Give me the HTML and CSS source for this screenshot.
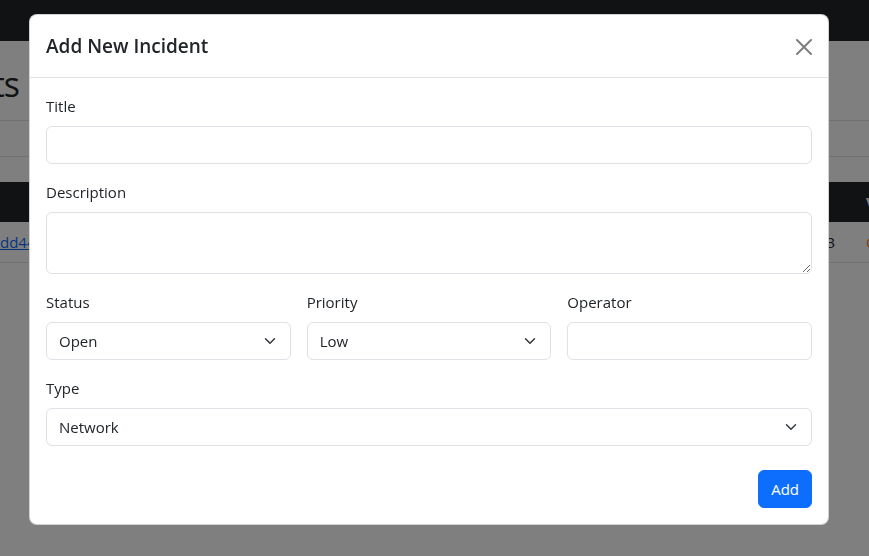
FILE: index.html
```html
<!DOCTYPE html>
<html lang="en">
<head>
<meta charset="utf-8">
<title>Incidents</title>
<link rel="stylesheet" href="styles.css">
</head>
<body>
  <nav class="navbar"></nav>
  <main class="page">
    <div class="page-head"><h1 class="page-title">Incidents</h1></div>
    <div class="toolbar"></div>
    <table class="grid">
      <colgroup>
        <col class="c-id"><col class="c-title"><col class="c-type"><col class="c-num"><col class="c-vendor">
      </colgroup>
      <thead>
        <tr><th></th><th>Title</th><th>Type</th><th>Priority</th><th class="vendor">Vendor</th></tr>
      </thead>
      <tbody>
        <tr><td><a href="#" class="id-link">dd4421a7</a></td><td>Router outage</td><td>Network</td><td class="num">3</td><td class="vendor status-open">Open</td></tr>
      </tbody>
    </table>
  </main>

  <div class="backdrop"></div>

  <div class="modal" role="dialog" aria-modal="true">
    <div class="modal-dialog">
      <div class="modal-content">
        <div class="modal-header">
          <h5 class="modal-title">Add New Incident</h5>
          <button type="button" class="btn-close" aria-label="Close">
            <svg viewBox="0 0 16 16" width="16" height="16" aria-hidden="true"><path d="M.293.293a1 1 0 0 1 1.414 0L8 6.586 14.293.293a1 1 0 1 1 1.414 1.414L9.414 8l6.293 6.293a1 1 0 0 1-1.414 1.414L8 9.414l-6.293 6.293a1 1 0 0 1-1.414-1.414L6.586 8 .293 1.707a1 1 0 0 1 0-1.414z"/></svg>
          </button>
        </div>
        <div class="modal-body">
          <form class="form">
            <div class="field">
              <label class="label" for="title">Title</label>
              <input class="control" id="title" type="text">
            </div>
            <div class="field">
              <label class="label" for="desc">Description</label>
              <textarea class="control textarea" id="desc" rows="2"></textarea>
            </div>
            <div class="row3">
              <div class="field">
                <label class="label" for="status">Status</label>
                <select class="control select" id="status"><option>Open</option><option>Closed</option></select>
              </div>
              <div class="field">
                <label class="label" for="priority">Priority</label>
                <select class="control select" id="priority"><option>Low</option><option>Medium</option><option>High</option></select>
              </div>
              <div class="field">
                <label class="label" for="operator">Operator</label>
                <input class="control" id="operator" type="text">
              </div>
            </div>
            <div class="field">
              <label class="label" for="type">Type</label>
              <select class="control select" id="type"><option>Network</option><option>Hardware</option><option>Software</option></select>
            </div>
            <div class="actions">
              <button type="submit" class="btn-primary">Add</button>
            </div>
          </form>
        </div>
      </div>
    </div>
  </div>
</body>
</html>
```

FILE: styles.css
```css
* { box-sizing: border-box; }

html, body {
  margin: 0;
  padding: 0;
}

body {
  font-family: "Open Sans", "Noto Sans", sans-serif;
  font-size: 15px;
  line-height: 24px;
  color: #212529;
  background: #fff;
  overflow: hidden;
  width: 869px;
  height: 556px;
}

/* ---------- background page ---------- */
.navbar {
  height: 41px;
  background: #212529;
}

.page {
  padding: 0;
}

.page-head {
  width: 19px;
  height: 79px;
  display: flex;
  justify-content: flex-end;
  padding-top: 21px;
}

.page-title {
  margin: 0;
  font-size: 34px;
  line-height: 44px;
  font-weight: 500;
  letter-spacing: -1px;
  white-space: nowrap;
  color: #212529;
}

.toolbar {
  height: 37px;
  border-top: 1px solid #dee2e6;
  border-bottom: 1px solid #dee2e6;
  margin-bottom: 25px;
}

.grid {
  border-collapse: collapse;
  table-layout: fixed;
  width: 1100px;
  margin-left: -8px;
}

.c-id { width: 160px; }
.c-title { width: 250px; }
.c-type { width: 200px; }
.c-num { width: 241px; }
.c-vendor { width: 249px; }

.grid th,
.grid td {
  padding: 8px;
  text-align: left;
  white-space: nowrap;
  overflow: hidden;
}

.grid th {
  background: #212529;
  color: #fff;
  font-weight: 700;
  height: 40px;
}

.grid td {
  border-bottom: 1px solid #dee2e6;
}

.grid .num { text-align: right; }
.grid .vendor { padding-left: 23px; }

.id-link { color: #0d6efd; text-decoration: underline; }
.status-open { color: #fd7e14; }

/* ---------- overlay ---------- */
.backdrop {
  position: fixed;
  inset: 0;
  background: rgba(0, 0, 0, 0.5);
}

.modal {
  position: fixed;
  inset: 0;
}

.modal-dialog {
  width: 800px;
  margin: 14px 0 0 29px;
}

.modal-content {
  background: #fff;
  border: 1px solid rgba(0, 0, 0, 0.175);
  border-radius: 8px;
}

.modal-header {
  display: flex;
  align-items: center;
  justify-content: space-between;
  padding: 16px;
  border-bottom: 1px solid #dee2e6;
}

.modal-title {
  margin: 0;
  font-size: 19px;
  line-height: 30px;
  font-weight: 600;
  color: #212529;
}

.btn-close {
  display: flex;
  padding: 0;
  border: 0;
  background: transparent;
  width: 16px;
  height: 16px;
  cursor: pointer;
  margin-top: 1px;
}

.btn-close svg {
  fill: #000;
  opacity: 0.5;
}

.modal-body {
  padding: 16px;
}

.form {
  margin: 0;
}

.field {
  display: flex;
  flex-direction: column;
  margin-bottom: 16px;
}

.label {
  display: block;
  margin-bottom: 8px;
  line-height: 24px;
}

.control {
  display: block;
  width: 100%;
  height: 38px;
  padding: 6px 12px;
  font-family: inherit;
  font-size: 15px;
  line-height: 24px;
  color: #212529;
  background-color: #fff;
  border: 1px solid #dee2e6;
  border-radius: 6px;
  outline: none;
}

.textarea {
  height: 62px;
  resize: vertical;
}

.select {
  appearance: none;
  -webkit-appearance: none;
  padding-right: 36px;
  background-image: url("data:image/svg+xml,%3csvg xmlns='http://www.w3.org/2000/svg' viewBox='0 0 16 16'%3e%3cpath fill='none' stroke='%23343a40' stroke-linecap='round' stroke-linejoin='round' stroke-width='2' d='m2 5 6 6 6-6'/%3e%3c/svg%3e");
  background-repeat: no-repeat;
  background-position: right 12px center;
  background-size: 16px 12px;
}

.row3 {
  display: grid;
  grid-template-columns: repeat(3, 1fr);
  column-gap: 16px;
}

.actions {
  display: flex;
  justify-content: flex-end;
  margin-top: 24px;
}

.form .field:last-of-type {
  margin-bottom: 0;
}

.btn-primary {
  font-family: inherit;
  font-size: 15px;
  line-height: 24px;
  padding: 6px 12px;
  color: #fff;
  background: #0d6efd;
  border: 1px solid #0d6efd;
  border-radius: 6px;
  cursor: pointer;
}
```
